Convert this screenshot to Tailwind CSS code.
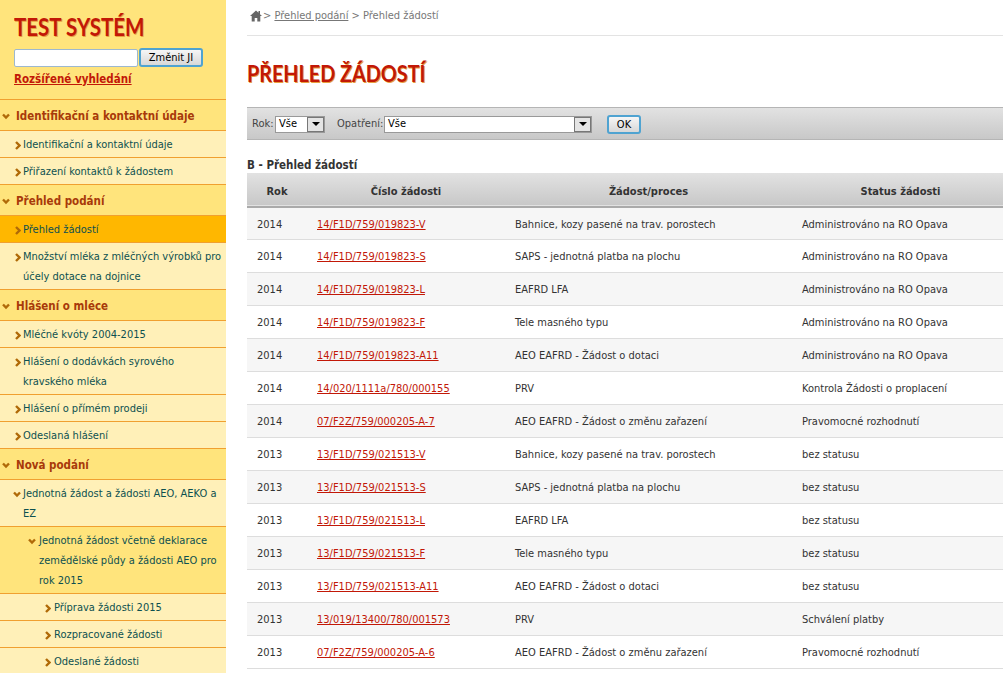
<!DOCTYPE html>
<html lang="cs">
<head>
  <meta charset="UTF-8">
  <title>Přehled žádostí</title>
  <script src="https://cdn.jsdelivr.net/npm/@tailwindcss/browser@4"></script>
</head>
<body class="bg-white">
<div class="flex h-[673px] w-[1003px] overflow-hidden font-['DejaVu_Sans_Condensed','DejaVu_Sans',sans-serif] text-[11px] text-[#333]">

  <!-- Sidebar -->
  <aside class="w-[226px] shrink-0 bg-[#ffe47c]">
    <div class="h-[99px] pl-[14px] pt-[12px]">
      <div class="origin-left scale-x-[.82] font-['Lato',sans-serif] text-[25px] font-bold leading-[29px] text-[#c21807] [text-shadow:1px_1px_0_#e8a040]">TEST SYSTÉM</div>
      <div class="mt-[7px] flex items-center gap-[1px]">
        <input type="text" class="h-[18px] w-[124px] rounded-[2px] border border-[#9db8cf] bg-white">
        <button class="h-[19px] w-[64px] rounded-[3px] border-2 border-[#4fa3d1] bg-gradient-to-b from-[#f6f6f6] to-[#d8d8d8] text-[11px] leading-[13px] text-black">Změnit JI</button>
      </div>
      <a href="#" class="mt-[3px] block text-[11.5px] font-bold leading-[18px] text-[#c21807] underline">Rozšířené vyhledání</a>
    </div>

    <nav class="border-t border-[#f0a030] leading-[20px] text-[#0d5050]">
      <div class="flex h-[31px] items-center gap-[5px] border-b border-[#f0a030] pl-[2px] pt-[2px] text-[11.5px] font-bold text-[#a83a0a]">
        <svg class="h-[7px] w-[8px] shrink-0" viewBox="0 0 8 7"><path d="M1 1.500l3 3 3-3" fill="none" stroke="#b06a08" stroke-width="2.400"/></svg>
        <span class="ml-[1px]">Identifikační a kontaktní údaje</span>
      </div>
      <div class="flex h-[27px] items-center border-b border-[#f0a030] bg-[#fff0b8] pl-[15px] pt-[2px]">
        <svg class="mr-[2px] h-[9px] w-[6px] shrink-0" viewBox="0 0 6 9"><path d="M1 1l3.500 3.500L1 8" fill="none" stroke="#b06a08" stroke-width="2.400"/></svg>
        <span>Identifikační a kontaktní údaje</span>
      </div>
      <div class="flex h-[27px] items-center border-b border-[#f0a030] bg-[#fff0b8] pl-[15px] pt-[2px]">
        <svg class="mr-[2px] h-[9px] w-[6px] shrink-0" viewBox="0 0 6 9"><path d="M1 1l3.500 3.500L1 8" fill="none" stroke="#b06a08" stroke-width="2.400"/></svg>
        <span>Přiřazení kontaktů k žádostem</span>
      </div>

      <div class="flex h-[31px] items-center gap-[5px] border-b border-[#f0a030] pl-[2px] pt-[2px] text-[11.5px] font-bold text-[#a83a0a]">
        <svg class="h-[7px] w-[8px] shrink-0" viewBox="0 0 8 7"><path d="M1 1.500l3 3 3-3" fill="none" stroke="#b06a08" stroke-width="2.400"/></svg>
        <span class="ml-[1px]">Přehled podání</span>
      </div>
      <div class="flex h-[27px] items-center border-b border-[#f0a030] bg-[#ffb700] pl-[15px] pt-[2px]">
        <svg class="mr-[2px] h-[9px] w-[6px] shrink-0" viewBox="0 0 6 9"><path d="M1 1l3.500 3.500L1 8" fill="none" stroke="#b06a08" stroke-width="2.400"/></svg>
        <span>Přehled žádostí</span>
      </div>
      <div class="relative border-b border-[#f0a030] bg-[#fff0b8] pb-[2px] pl-[23px] pr-[2px] pt-[4px]">
        <svg class="absolute left-[15px] top-[10px] h-[9px] w-[6px]" viewBox="0 0 6 9"><path d="M1 1l3.500 3.500L1 8" fill="none" stroke="#b06a08" stroke-width="2.400"/></svg>
        Množství mléka z mléčných výrobků pro účely dotace na dojnice
      </div>

      <div class="flex h-[31px] items-center gap-[5px] border-b border-[#f0a030] pl-[2px] pt-[2px] text-[11.5px] font-bold text-[#a83a0a]">
        <svg class="h-[7px] w-[8px] shrink-0" viewBox="0 0 8 7"><path d="M1 1.500l3 3 3-3" fill="none" stroke="#b06a08" stroke-width="2.400"/></svg>
        <span class="ml-[1px]">Hlášení o mléce</span>
      </div>
      <div class="flex h-[27px] items-center border-b border-[#f0a030] bg-[#fff0b8] pl-[15px] pt-[2px]">
        <svg class="mr-[2px] h-[9px] w-[6px] shrink-0" viewBox="0 0 6 9"><path d="M1 1l3.500 3.500L1 8" fill="none" stroke="#b06a08" stroke-width="2.400"/></svg>
        <span>Mléčné kvóty 2004-2015</span>
      </div>
      <div class="relative border-b border-[#f0a030] bg-[#fff0b8] pb-[2px] pl-[23px] pr-[6px] pt-[4px]">
        <svg class="absolute left-[15px] top-[10px] h-[9px] w-[6px]" viewBox="0 0 6 9"><path d="M1 1l3.500 3.500L1 8" fill="none" stroke="#b06a08" stroke-width="2.400"/></svg>
        Hlášení o dodávkách syrového kravského mléka
      </div>
      <div class="flex h-[27px] items-center border-b border-[#f0a030] bg-[#fff0b8] pl-[15px] pt-[2px]">
        <svg class="mr-[2px] h-[9px] w-[6px] shrink-0" viewBox="0 0 6 9"><path d="M1 1l3.500 3.500L1 8" fill="none" stroke="#b06a08" stroke-width="2.400"/></svg>
        <span>Hlášení o přímém prodeji</span>
      </div>
      <div class="flex h-[27px] items-center border-b border-[#f0a030] bg-[#fff0b8] pl-[15px] pt-[2px]">
        <svg class="mr-[2px] h-[9px] w-[6px] shrink-0" viewBox="0 0 6 9"><path d="M1 1l3.500 3.500L1 8" fill="none" stroke="#b06a08" stroke-width="2.400"/></svg>
        <span>Odeslaná hlášení</span>
      </div>

      <div class="flex h-[31px] items-center gap-[5px] border-b border-[#f0a030] pl-[2px] pt-[2px] text-[11.5px] font-bold text-[#a83a0a]">
        <svg class="h-[7px] w-[8px] shrink-0" viewBox="0 0 8 7"><path d="M1 1.500l3 3 3-3" fill="none" stroke="#b06a08" stroke-width="2.400"/></svg>
        <span class="ml-[1px]">Nová podání</span>
      </div>
      <div class="relative border-b border-[#f0a030] bg-[#fff0b8] pb-[2px] pl-[23px] pr-[6px] pt-[4px]">
        <svg class="absolute left-[13px] top-[11px] h-[7px] w-[8px]" viewBox="0 0 8 7"><path d="M1 1.500l3 3 3-3" fill="none" stroke="#b06a08" stroke-width="2.400"/></svg>
        Jednotná žádost a žádosti AEO, AEKO a EZ
      </div>
      <div class="relative border-b border-[#f0a030] pb-[2px] pl-[39px] pr-[6px] pt-[4px]">
        <svg class="absolute left-[28px] top-[11px] h-[7px] w-[8px]" viewBox="0 0 8 7"><path d="M1 1.500l3 3 3-3" fill="none" stroke="#b06a08" stroke-width="2.400"/></svg>
        Jednotná žádost včetně deklarace zemědělské půdy a žádosti AEO pro rok 2015
      </div>
      <div class="flex h-[27px] items-center border-b border-[#f0a030] bg-[#fff0b8] pl-[45px] pt-[2px]">
        <svg class="mr-[3px] h-[9px] w-[6px] shrink-0" viewBox="0 0 6 9"><path d="M1 1l3.500 3.500L1 8" fill="none" stroke="#b06a08" stroke-width="2.400"/></svg>
        <span>Příprava žádosti 2015</span>
      </div>
      <div class="flex h-[27px] items-center border-b border-[#f0a030] bg-[#fff0b8] pl-[45px] pt-[2px]">
        <svg class="mr-[3px] h-[9px] w-[6px] shrink-0" viewBox="0 0 6 9"><path d="M1 1l3.500 3.500L1 8" fill="none" stroke="#b06a08" stroke-width="2.400"/></svg>
        <span>Rozpracované žádosti</span>
      </div>
      <div class="flex h-[27px] items-center border-b border-[#f0a030] bg-[#fff0b8] pl-[45px] pt-[2px]">
        <svg class="mr-[3px] h-[9px] w-[6px] shrink-0" viewBox="0 0 6 9"><path d="M1 1l3.500 3.500L1 8" fill="none" stroke="#b06a08" stroke-width="2.400"/></svg>
        <span>Odeslané žádosti</span>
      </div>
    </nav>
  </aside>

  <!-- Main -->
  <main class="min-w-0 flex-1 pl-[21px]">
    <div class="flex h-[36px] items-center gap-[1px] border-b border-[#e3e3e3] pl-[3px] pb-[2px] text-[#777]">
      <svg class="-mt-[1px] h-[12px] w-[12px]" viewBox="0 0 12 12"><path d="M6 0.500L0 6h1.700v5.500h3V8h2.600v3.500h3V6H12L10 4.200V1H8.500v1.800z" fill="#666"/></svg>
      <span>&gt; <a href="#" class="underline">Přehled podání</a> &gt; Přehled žádostí</span>
    </div>

    <h1 class="mt-[22px] origin-left scale-x-[.86] font-['Lato',sans-serif] text-[23px] font-bold leading-[30px] text-[#c21807] [text-shadow:1px_1px_0_#e8a040]">PŘEHLED ŽÁDOSTÍ</h1>

    <form class="mt-[19px] flex h-[33px] w-[756px] items-center border-y border-[#b5b5b5] bg-gradient-to-b from-[#e2e2e2] to-[#c8c8c8] pl-[5px] pt-[1px] text-[#444]">
      <span class="w-[23px]">Rok:</span>
      <span class="flex h-[17px] w-[50px] items-center justify-between border border-[#999] bg-white pl-[3px] text-black">Vše
        <span class="flex h-[15px] w-[17px] items-center justify-center border border-[#777] bg-[#e4e4e4]"><span class="border-x-[4px] border-t-[4px] border-x-transparent border-t-black"></span></span>
      </span>
      <span class="ml-[12px] w-[47px]">Opatření:</span>
      <span class="flex h-[17px] w-[208px] items-center justify-between border border-[#999] bg-white pl-[3px] text-black">Vše
        <span class="flex h-[15px] w-[17px] items-center justify-center border border-[#777] bg-[#e4e4e4]"><span class="border-x-[4px] border-t-[4px] border-x-transparent border-t-black"></span></span>
      </span>
      <button type="button" class="ml-[15px] h-[19px] w-[34px] rounded-[3px] border-2 border-[#4fa3d1] bg-gradient-to-b from-[#f6f6f6] to-[#d8d8d8] leading-[13px] text-black">OK</button>
    </form>

    <div class="mt-[17px] text-[11.5px] font-bold leading-[16px] text-[#333]">B - Přehled žádostí</div>

    <table class="w-[762px] table-fixed border-collapse">
      <colgroup><col class="w-[60px]"><col class="w-[198px]"><col class="w-[287px]"><col class="w-[217px]"></colgroup>
      <thead>
        <tr class="h-[34px] border-b-2 border-[#aaa] bg-gradient-to-b from-[#e2e2e2] to-[#c8c8c8] font-bold text-[#333]">
          <th class="pt-[5px] font-bold">Rok</th><th class="pt-[5px] font-bold">Číslo žádosti</th><th class="pt-[5px] font-bold">Žádost/proces</th><th class="pt-[5px] font-bold">Status žádosti</th>
        </tr>
      </thead>
      <tbody class="[&_td]:pl-[10px] [&_td]:pt-[4px] [&_a]:text-[#c21807] [&_a]:underline">
        <tr class="h-[32px] border-b border-[#ddd] bg-[#f6f6f6]"><td>2014</td><td><a href="#">14/F1D/759/019823-V</a></td><td>Bahnice, kozy pasené na trav. porostech</td><td>Administrováno na RO Opava</td></tr>
        <tr class="h-[33px] border-b border-[#ddd]"><td>2014</td><td><a href="#">14/F1D/759/019823-S</a></td><td>SAPS - jednotná platba na plochu</td><td>Administrováno na RO Opava</td></tr>
        <tr class="h-[33px] border-b border-[#ddd] bg-[#f6f6f6]"><td>2014</td><td><a href="#">14/F1D/759/019823-L</a></td><td>EAFRD LFA</td><td>Administrováno na RO Opava</td></tr>
        <tr class="h-[33px] border-b border-[#ddd]"><td>2014</td><td><a href="#">14/F1D/759/019823-F</a></td><td>Tele masného typu</td><td>Administrováno na RO Opava</td></tr>
        <tr class="h-[33px] border-b border-[#ddd] bg-[#f6f6f6]"><td>2014</td><td><a href="#">14/F1D/759/019823-A11</a></td><td>AEO EAFRD - Žádost o dotaci</td><td>Administrováno na RO Opava</td></tr>
        <tr class="h-[33px] border-b border-[#ddd]"><td>2014</td><td><a href="#">14/020/1111a/780/000155</a></td><td>PRV</td><td>Kontrola Žádosti o proplacení</td></tr>
        <tr class="h-[33px] border-b border-[#ddd] bg-[#f6f6f6]"><td>2014</td><td><a href="#">07/F2Z/759/000205-A-7</a></td><td>AEO EAFRD - Žádost o změnu zařazení</td><td>Pravomocné rozhodnutí</td></tr>
        <tr class="h-[33px] border-b border-[#ddd]"><td>2013</td><td><a href="#">13/F1D/759/021513-V</a></td><td>Bahnice, kozy pasené na trav. porostech</td><td>bez statusu</td></tr>
        <tr class="h-[33px] border-b border-[#ddd] bg-[#f6f6f6]"><td>2013</td><td><a href="#">13/F1D/759/021513-S</a></td><td>SAPS - jednotná platba na plochu</td><td>bez statusu</td></tr>
        <tr class="h-[33px] border-b border-[#ddd]"><td>2013</td><td><a href="#">13/F1D/759/021513-L</a></td><td>EAFRD LFA</td><td>bez statusu</td></tr>
        <tr class="h-[33px] border-b border-[#ddd] bg-[#f6f6f6]"><td>2013</td><td><a href="#">13/F1D/759/021513-F</a></td><td>Tele masného typu</td><td>bez statusu</td></tr>
        <tr class="h-[33px] border-b border-[#ddd]"><td>2013</td><td><a href="#">13/F1D/759/021513-A11</a></td><td>AEO EAFRD - Žádost o dotaci</td><td>bez statusu</td></tr>
        <tr class="h-[33px] border-b border-[#ddd] bg-[#f6f6f6]"><td>2013</td><td><a href="#">13/019/13400/780/001573</a></td><td>PRV</td><td>Schválení platby</td></tr>
        <tr class="h-[33px] border-b border-[#ddd]"><td>2013</td><td><a href="#">07/F2Z/759/000205-A-6</a></td><td>AEO EAFRD - Žádost o změnu zařazení</td><td>Pravomocné rozhodnutí</td></tr>
      </tbody>
    </table>
  </main>
</div>
</body>
</html>
